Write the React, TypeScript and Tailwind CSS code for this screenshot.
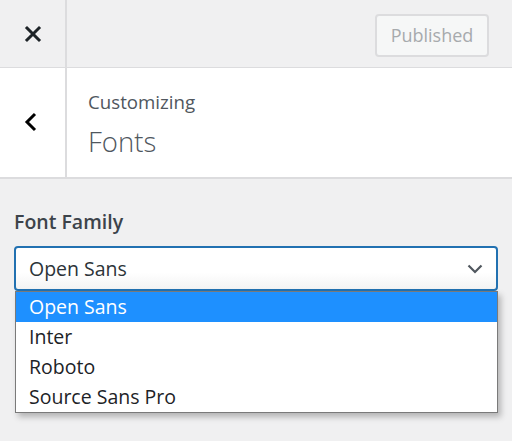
import React from "react";

export default function App() {
  const font = { fontFamily: '"Open Sans", "Noto Sans", sans-serif' };
  return (
    <div className="w-[512px] h-[441px] bg-[#f0f0f1] overflow-hidden" style={font}>
      {/* Top bar */}
      <div className="flex h-[68px] border-b border-[#dcdcde]">
        <div className="w-[67px] flex items-center justify-center border-r-2 border-[#dcdcde]">
          <svg width="18" height="18" viewBox="0 0 18 18" className="mt-[1px]">
            <path d="M3 3 L15 15 M15 3 L3 15" stroke="#1d2327" strokeWidth="3" strokeLinecap="square" />
          </svg>
        </div>
        <div className="flex-1 flex justify-end items-start pt-[14px] pr-[23px]">
          <div className="h-[43px] w-[114px] flex items-center justify-center rounded-[4px] border-2 border-[#dcdcde] bg-[#f6f7f7] text-[#a7aaad] text-[18px]">
            Published
          </div>
        </div>
      </div>
      {/* Header */}
      <div className="flex h-[111px] bg-white border-b-2 border-[#dcdcde]">
        <div className="w-[67px] flex items-center justify-center border-r-2 border-[#dcdcde]">
          <svg width="14" height="20" viewBox="0 0 14 20" className="-ml-[4px] -mt-[2px]">
            <path d="M11 2 L3 10 L11 18" stroke="#000" strokeWidth="3" fill="none" />
          </svg>
        </div>
        <div className="flex-1 pl-[21px] pt-[22px] text-[#50575e]">
          <div className="text-[18.7px] leading-[24px]">Customizing</div>
          <div className="text-[27.5px] leading-[36px] mt-[10px] font-light">Fonts</div>
        </div>
      </div>
      {/* Body */}
      <div className="px-[14px] pt-[30px]">
        <div className="text-[19.5px] leading-[26px] font-semibold text-[#3c434a]">Font Family</div>
        <div className="relative mt-[11px]">
          <div className="h-[45px] rounded-[4px] border-2 border-[#2271b1] bg-gradient-to-b from-white from-60% to-[#f3f3f3] flex items-center pl-[13px] pr-[13px] text-[19.5px] text-[#2c3338]">
            <span className="flex-1">Open Sans</span>
            <svg width="16" height="10" viewBox="0 0 16 10">
              <path d="M1.5 1.5 L8 8 L14.5 1.5" stroke="#50575e" strokeWidth="2.2" fill="none" />
            </svg>
          </div>
          <div className="absolute left-[1px] right-0 top-[45px] bg-white border border-[#7a7a7a] shadow-[3px_4px_6px_rgba(0,0,0,0.25)] text-[19.5px] text-[#1d2327]">
            <div className="h-[30px] flex items-center pl-[13px] bg-[#1e90ff] text-white">Open Sans</div>
            <div className="h-[30px] flex items-center pl-[13px]">Inter</div>
            <div className="h-[30px] flex items-center pl-[13px]">Roboto</div>
            <div className="h-[30px] flex items-center pl-[13px]">Source Sans Pro</div>
          </div>
        </div>
      </div>
    </div>
  );
}
